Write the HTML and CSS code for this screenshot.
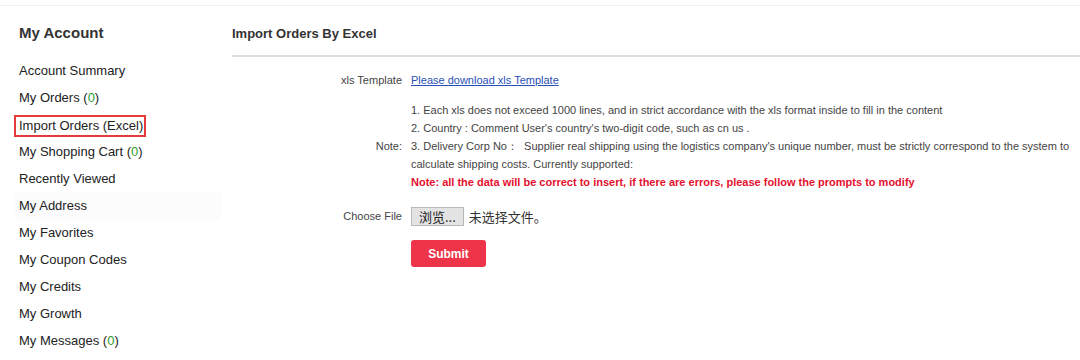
FILE: index.html
```html
<!DOCTYPE html>
<html>
<head>
<meta charset="utf-8">
<link rel="stylesheet" href="styles.css">
</head>
<body>
<div class="topbar"></div>
<div class="page">
  <aside class="sidebar">
    <h2 class="side-title">My Account</h2>
    <ul class="side-list">
      <li class="side-item">Account Summary</li>
      <li class="side-item">My Orders (<span class="count">0</span>)</li>
      <li class="side-item"><span class="current">Import Orders (Excel)</span></li>
      <li class="side-item">My Shopping Cart (<span class="count">0</span>)</li>
      <li class="side-item">Recently Viewed</li>
      <li class="side-item hover">My Address</li>
      <li class="side-item">My Favorites</li>
      <li class="side-item">My Coupon Codes</li>
      <li class="side-item">My Credits</li>
      <li class="side-item">My Growth</li>
      <li class="side-item">My Messages (<span class="count">0</span>)</li>
    </ul>
  </aside>
  <main class="main">
    <h1 class="main-title">Import Orders By Excel</h1>
    <div class="form">
      <div class="row row-template">
        <div class="label">xls Template</div>
        <div class="field"><a class="dl-link" href="#">Please download xls Template</a></div>
      </div>
      <div class="row row-note">
        <div class="label">Note:</div>
        <div class="field notes">
          <p>1. Each xls does not exceed 1000 lines, and in strict accordance with the xls format inside to fill in the content</p>
          <p>2. Country : Comment User's country's two-digit code, such as cn us .</p>
          <p>3. Delivery Corp No：&nbsp;&nbsp;Supplier real shipping using the logistics company's unique number, must be strictly correspond to the system to calculate shipping costs. Currently supported:</p>
          <p class="warn">Note: all the data will be correct to insert, if there are errors, please follow the prompts to modify</p>
        </div>
      </div>
      <div class="row row-file">
        <div class="label">Choose File</div>
        <div class="field file-field"><span class="file-btn">浏览...</span><span class="file-none">未选择文件。</span></div>
      </div>
      <div class="row row-submit">
        <div class="label"></div>
        <div class="field"><button class="submit" type="button">Submit</button></div>
      </div>
    </div>
  </main>
</div>
</body>
</html>
```

FILE: styles.css
```css
* { box-sizing: border-box; }
html, body { margin: 0; padding: 0; background: #fff; }
body {
  font-family: "Liberation Sans", Arial, sans-serif;
  color: #333;
  width: 1080px;
  height: 360px;
  overflow: hidden;
}
.topbar {
  height: 6px;
  border-bottom: 1px solid #eee;
}
.page {
  display: flex;
}
.sidebar {
  width: 206px;
  margin-left: 15px;
  margin-right: 11px;
  flex: none;
}
.side-title {
  margin: 0;
  padding: 18px 4px 0;
  font-size: 15px;
  font-weight: bold;
  line-height: 18px;
  color: #333;
}
.side-list {
  list-style: none;
  margin: 0;
  padding: 15px 0 0;
}
.side-item {
  height: 27px;
  line-height: 27px;
  padding: 0 4px;
  font-size: 13px;
  color: #222;
}
.side-item.hover { background: #fcfcfc; }
.count { color: #2e9b2e; }
.current {
  display: inline-block;
  line-height: 18px;
  margin-left: -5px;
  padding: 0 1px 0 3px;
  border: 2px solid #e53a3a;
  vertical-align: -1px;
}
.main {
  flex: 1;
}
.main-title {
  margin: 0;
  padding: 20px 0 0;
  font-size: 13px;
  font-weight: bold;
  line-height: 15px;
  height: 51px;
  border-bottom: 2px solid #ddd;
  color: #333;
}
.form {
  padding-top: 13px;
  font-size: 11px;
}
.row {
  display: flex;
  align-items: center;
}
.label {
  width: 179px;
  flex: none;
  text-align: right;
  padding-right: 9px;
  color: #444;
}
.field { flex: 1; }
.row-template { height: 20px; }
.dl-link {
  color: #2a4fb8;
  text-decoration: underline;
  font-size: 11px;
}
.row-note { margin-top: 11px; }
.notes p {
  margin: 0;
  line-height: 18px;
  color: #444;
}
.notes .warn {
  color: #e4102e;
  font-weight: bold;
}
.row-file { margin-top: 15px; height: 20px; }
.file-field { display: flex; align-items: center; }
.file-btn {
  display: inline-block;
  height: 19px;
  line-height: 17px;
  padding: 0 7px;
  border: 1px solid #b8b8b8;
  background: #e3e3e3;
  font-family: "Noto Sans CJK SC", sans-serif;
  font-size: 13px;
  color: #222;
}
.file-none {
  margin-left: 5px;
  font-family: "Noto Sans CJK SC", sans-serif;
  font-size: 13px;
  color: #333;
}
.row-submit { margin-top: 14px; }
.submit {
  width: 75px;
  height: 27px;
  border: none;
  border-radius: 3px;
  background: #ee3448;
  color: #fff;
  font-family: "Liberation Sans", Arial, sans-serif;
  font-size: 12px;
  font-weight: bold;
  padding: 0;
}
```
